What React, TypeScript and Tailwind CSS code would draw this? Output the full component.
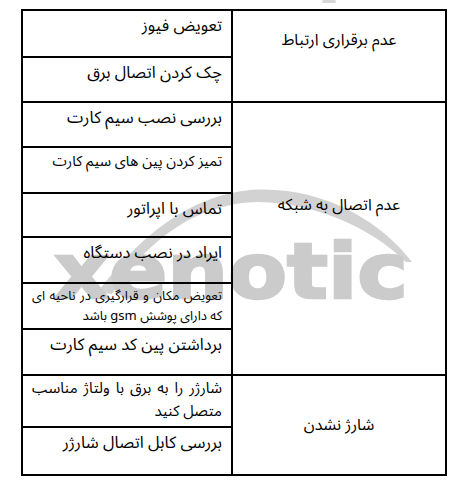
const normal = "text-[16.5px] leading-6 pt-[3px]";

const rows: { h: string; text: string; size: string }[] = [
  { h: "h-[47px]", text: "تعویض فیوز", size: normal },
  { h: "h-[45px]", text: "چک کردن اتصال برق", size: normal },
  { h: "h-[45px]", text: "بررسی نصب سیم کارت", size: normal },
  { h: "h-[46px]", text: "تمیز کردن پین های سیم کارت", size: "text-[14.5px] leading-6 pt-[2px]" },
  { h: "h-[44px]", text: "تماس با اپراتور", size: normal },
  { h: "h-[46px]", text: "ایراد در نصب دستگاه", size: normal },
  {
    h: "h-[46px]",
    text: "تعویض مکان و قرارگیری در ناحیه ای که دارای پوشش gsm باشد",
    size: "text-[13px] leading-5 pt-[2px] text-justify",
  },
  { h: "h-[46px]", text: "برداشتن پین کد سیم کارت", size: normal },
  {
    h: "h-[52px]",
    text: "شارژر را به برق با ولتاژ مناسب متصل کنید",
    size: "text-[15px] leading-[23px] pt-[1px] text-justify",
  },
  { h: "h-[48px]", text: "بررسی کابل اتصال شارژر", size: normal },
];

function Watermark() {
  return (
    <svg
      className="absolute left-0 top-0 pointer-events-none"
      width="461"
      height="480"
      viewBox="0 0 461 480"
    >
      <rect x="322" y="0" width="14" height="3" rx="1.5" fill="#d6d6d6" />
      <path
        d="M98 292 C140 235 190 196 250 190 C320 185 380 220 412 262 L406 262 C372 229 318 203 258 202 C200 203 150 236 112 294 Z"
        fill="#d2d2d2"
      />
      <text
        x="54"
        y="298"
        textLength="354"
        lengthAdjust="spacingAndGlyphs"
        fill="#cbcbcb"
        stroke="#cbcbcb"
        strokeWidth="2.5"
        fontFamily="'DejaVu Sans', sans-serif"
        fontWeight="bold"
        fontSize="76"
      >
        xenotic
      </text>
    </svg>
  );
}

export default function App() {
  const cell = "border-2 border-black align-top";
  const side = "border-2 border-black w-[214px] text-center text-[16px] leading-6";
  return (
    <div className="relative w-[461px] h-[480px] bg-white font-['Noto_Sans_Arabic','DejaVu_Sans',sans-serif] text-black">
      <Watermark />
      <div className="relative pl-[21px] pt-[9px]">
        <table dir="rtl" className="w-[426px] border-collapse table-fixed">
          <tbody>
            {rows.map((r, i) => (
              <tr key={i} className={r.h}>
                {i === 0 && (
                  <td rowSpan={2} className={`${side} align-top pt-[17px]`}>
                    عدم برقراری ارتباط
                  </td>
                )}
                {i === 2 && (
                  <td rowSpan={6} className={`${side} align-top pt-[90px]`}>
                    عدم اتصال به شبکه
                  </td>
                )}
                {i === 8 && (
                  <td rowSpan={2} className={`${side} align-middle`}>
                    شارژ نشدن
                  </td>
                )}
                <td className={`${cell} px-[9px] ${r.size}`}>{r.text}</td>
              </tr>
            ))}
          </tbody>
        </table>
      </div>
    </div>
  );
}
